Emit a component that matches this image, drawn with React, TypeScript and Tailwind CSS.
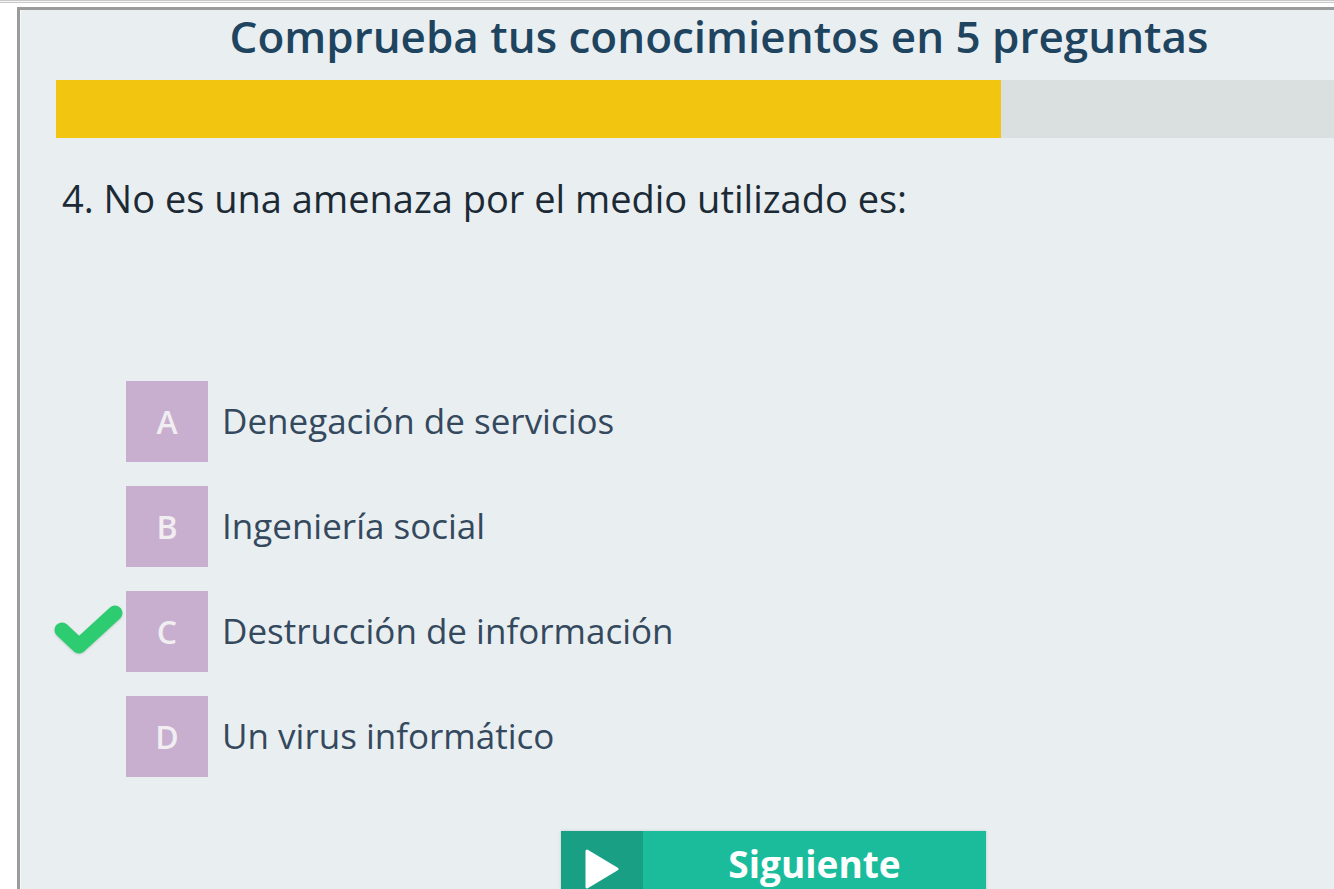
const options = [
	{ letter: 'A', text: 'Denegación de servicios', correct: false },
	{ letter: 'B', text: 'Ingeniería social', correct: false },
	{ letter: 'C', text: 'Destrucción de información', correct: true },
	{ letter: 'D', text: 'Un virus informático', correct: false },
]

function Check() {
	return (
		<svg width="70" height="56" viewBox="0 0 70 56" className="drop-shadow-[0_1px_1px_rgba(0,0,0,0.15)]">
			<path
				d="M8 26 L25 42 L61 9"
				fill="none"
				stroke="#2ecc71"
				strokeWidth="15"
				strokeLinecap="round"
				strokeLinejoin="round"
			/>
		</svg>
	)
}

export default function App() {
	return (
		<div className="h-[889px] w-[1334px] overflow-hidden bg-white font-['Open_Sans',sans-serif]">
			<div className="h-[3px] border-t border-b border-[#c9c9c9] bg-[#f4f4f4]" />
			<div className="ml-[17px] mt-[4px] h-[900px] w-[1400px] border-l-[3px] border-t-[3px] border-[#9b9b9b] bg-[#e9eef0]">
				<div className="h-full border-l border-[#f5f7f8]">
					<h1 className="text-center text-[44px] font-semibold leading-[52px] text-[#1f445f]">
						Comprueba tus conocimientos en 5 preguntas
					</h1>
					<div className="ml-[35px] mt-[18px] flex h-[58px] w-[1322px] bg-[#dadfe0]">
						<div className="h-full w-[945px] bg-[#f2c511]" />
					</div>
					<p className="ml-[41px] mt-[36px] text-[38px] leading-[48px] text-[#1c2a36]">
						4. No es una amenaza por el medio utilizado es:
					</p>
					<ul className="mt-[159px] flex flex-col gap-[24px]">
						{options.map((o) => (
							<li key={o.letter} className="flex items-center">
								<div className="flex w-[105px] justify-end pr-[2px]">
									{o.correct && <Check />}
								</div>
								<div className="flex h-[81px] w-[82px] items-center justify-center bg-[#c8afd0] text-[32px] font-semibold text-[#f1eef2]">
									{o.letter}
								</div>
								<span className="ml-[14px] text-[35px] text-[#34495e]">{o.text}</span>
							</li>
						))}
					</ul>
					<button
						type="button"
						className="ml-[540px] mt-[54px] flex h-[70px] w-[425px] bg-[#1abc9c] shadow-[0_0_3px_rgba(0,0,0,0.15)]"
					>
						<span className="flex h-full w-[82px] items-start justify-center bg-[#189f84] pt-[17px]">
							<svg width="38" height="42" viewBox="0 0 38 42">
								<path d="M4 3 L34 21 L4 39 Z" fill="white" strokeLinejoin="round" stroke="white" strokeWidth="3" />
							</svg>
						</span>
						<span className="flex flex-1 items-start justify-center pt-[10px] text-[37px] font-bold leading-[46px] text-white">
							Siguiente
						</span>
					</button>
				</div>
			</div>
		</div>
	)
}
